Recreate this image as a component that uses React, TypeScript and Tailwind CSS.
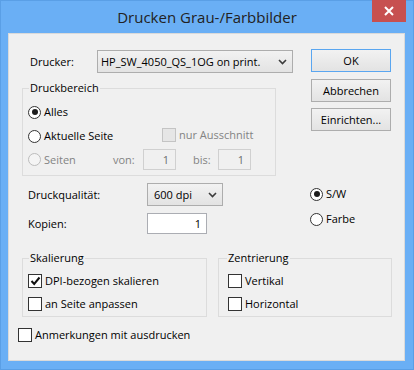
import { ReactNode } from 'react';

function Radio({ checked, disabled, label }: { checked?: boolean; disabled?: boolean; label: string }) {
  return (
    <div className="flex items-center h-[16px]">
      <span
        className={`w-[13px] h-[13px] rounded-full border flex items-center justify-center ${
          disabled ? 'border-[#bcbcbc] bg-[#f4f4f4]' : 'border-[#333333] bg-white'
        }`}
      >
        {checked && <span className="w-[6px] h-[6px] rounded-full bg-[#1c1c1c]" />}
      </span>
      <span className={`ml-[3px] ${disabled ? 'text-[#838383]' : 'text-black'}`}>{label}</span>
    </div>
  );
}

function Check({ checked, disabled, label }: { checked?: boolean; disabled?: boolean; label: string }) {
  return (
    <div className="flex items-center h-[16px]">
      <span
        className={`w-[14px] h-[14px] border flex items-center justify-center ${
          disabled ? 'border-[#c4c4c4] bg-[#e6e6e6]' : 'border-[#333333] bg-white'
        }`}
      >
        {checked && (
          <svg width="11" height="10" viewBox="0 0 11 10">
            <path d="M1.5 5 L4.2 8 L9.5 1.5" fill="none" stroke="#111" strokeWidth="2" />
          </svg>
        )}
      </span>
      <span className={`ml-[3px] ${disabled ? 'text-[#838383]' : 'text-black'}`}>{label}</span>
    </div>
  );
}

function Button({ children, primary }: { children: ReactNode; primary?: boolean }) {
  return (
    <button
      className={`w-[80px] h-[23px] border bg-gradient-to-b from-[#f2f2f2] to-[#e3e3e3] text-black flex items-center justify-center ${
        primary ? 'border-[#5aa6f0]' : 'border-[#adadad]'
      }`}
    >
      {children}
    </button>
  );
}

function Chevron() {
  return (
    <svg width="9" height="6" viewBox="0 0 9 6">
      <path d="M1 1 L4.5 4.5 L8 1" fill="none" stroke="#3c3c3c" strokeWidth="1.6" />
    </svg>
  );
}

function Group({
  title,
  className,
  legendClass,
  children,
}: {
  title: string;
  className: string;
  legendClass: string;
  children: ReactNode;
}) {
  return (
    <fieldset className={`border border-[#dcdcdc] ${className}`}>
      <legend className={`px-[1px] h-[16px] leading-[16px] text-black ${legendClass}`}>{title}</legend>
      {children}
    </fieldset>
  );
}

export default function App() {
  return (
    <div className="w-[414px] h-[370px] bg-[#6aaff5] border border-[#5a9fe6] flex flex-col relative font-['Open_Sans',sans-serif] text-[11px] leading-[16px]">
      {/* Title bar */}
      <div className="h-[32px] flex items-center justify-center text-[15px] text-[#222222]">
        Drucken Grau-/Farbbilder
      </div>
      <div className="absolute top-[-1px] right-[7px] w-[34px] h-[22px] bg-[#c75050] flex items-center justify-center">
        <svg width="10" height="10" viewBox="0 0 10 10">
          <path d="M1 1 L9 9 M9 1 L1 9" stroke="white" strokeWidth="2" />
        </svg>
      </div>

      {/* Client area */}
      <div className="ml-[7px] w-[397px] h-[328px] bg-[#f0f0f0] border border-[#dadada] pl-[13px]">
        <div className="flex">
          {/* Left column */}
          <div className="w-[280px] flex flex-col">
            <div className="mt-[16px] flex items-center h-[23px]">
              <span className="ml-[8px] w-[67px]">Drucker:</span>
              <div className="w-[196px] h-[23px] border border-[#adadad] bg-gradient-to-b from-[#f2f2f2] to-[#e3e3e3] flex items-center justify-between pl-[3px] pr-[5px]">
                <span>HP_SW_4050_QS_1OG on print.</span>
                <Chevron />
              </div>
            </div>

            <Group title="Druckbereich" className="mt-[7px] w-[254px] h-[96px]" legendClass="ml-[6px]">
              <div className="pl-[5px] pt-[8px] flex flex-col">
                <Radio checked label="Alles" />
                <div className="mt-[8px] flex items-center">
                  <div className="w-[134px]">
                    <Radio label="Aktuelle Seite" />
                  </div>
                  <div className="-mt-[3px]">
                    <Check disabled label="nur Ausschnitt" />
                  </div>
                </div>
                <div className="mt-[5px] flex items-center h-[21px]">
                  <div className="w-[85px]">
                    <Radio disabled label="Seiten" />
                  </div>
                  <span className="w-[30px] text-[#838383]">von:</span>
                  <div className="w-[33px] h-[21px] border border-[#d0d0d0] bg-[#f0f0f0] text-[#6d6d6d] flex items-center justify-end pr-[6px]">
                    1
                  </div>
                  <span className="ml-[17px] w-[25px] text-[#838383]">bis:</span>
                  <div className="w-[33px] h-[21px] border border-[#d0d0d0] bg-[#f0f0f0] text-[#6d6d6d] flex items-center justify-end pr-[6px]">
                    1
                  </div>
                </div>
              </div>
            </Group>

            <div className="mt-[7px] flex items-center h-[23px]">
              <span className="ml-[6px] w-[119px]">Druckqualität:</span>
              <div className="w-[76px] h-[23px] border border-[#adadad] bg-gradient-to-b from-[#f2f2f2] to-[#e3e3e3] flex items-center justify-between pl-[6px] pr-[5px]">
                <span>600 dpi</span>
                <Chevron />
              </div>
            </div>
            <div className="mt-[7px] flex items-center h-[21px]">
              <span className="ml-[6px] w-[119px]">Kopien:</span>
              <div className="w-[60px] h-[21px] border border-[#abadb3] bg-white flex items-center justify-end pr-[5px]">
                1
              </div>
            </div>
          </div>

          {/* Right column */}
          <div className="ml-[9px] pt-[15px] flex flex-col">
            <Button primary>OK</Button>
            <div className="mt-[7px]">
              <Button>Abbrechen</Button>
            </div>
            <div className="mt-[6px]">
              <Button>Einrichten...</Button>
            </div>
            <div className="mt-[55px] -ml-[1px]">
              <Radio checked label="S/W" />
            </div>
            <div className="mt-[9px] -ml-[1px]">
              <Radio label="Farbe" />
            </div>
          </div>
        </div>

        {/* Scaling / centering */}
        <div className="mt-[16px] flex">
          <Group title="Skalierung" className="w-[185px] h-[67px]" legendClass="ml-[6px]">
            <div className="pl-[5px] pt-[7px] flex flex-col gap-[7px]">
              <Check checked label="DPI-bezogen skalieren" />
              <Check label="an Seite anpassen" />
            </div>
          </Group>
          <Group title="Zentrierung" className="ml-[11px] w-[174px] h-[67px]" legendClass="ml-[8px]">
            <div className="pl-[9px] pt-[7px] flex flex-col gap-[7px]">
              <Check label="Vertikal" />
              <Check label="Horizontal" />
            </div>
          </Group>
        </div>

        <div className="mt-[10px] -ml-[4px]">
          <Check label="Anmerkungen mit ausdrucken" />
        </div>
      </div>
    </div>
  );
}
